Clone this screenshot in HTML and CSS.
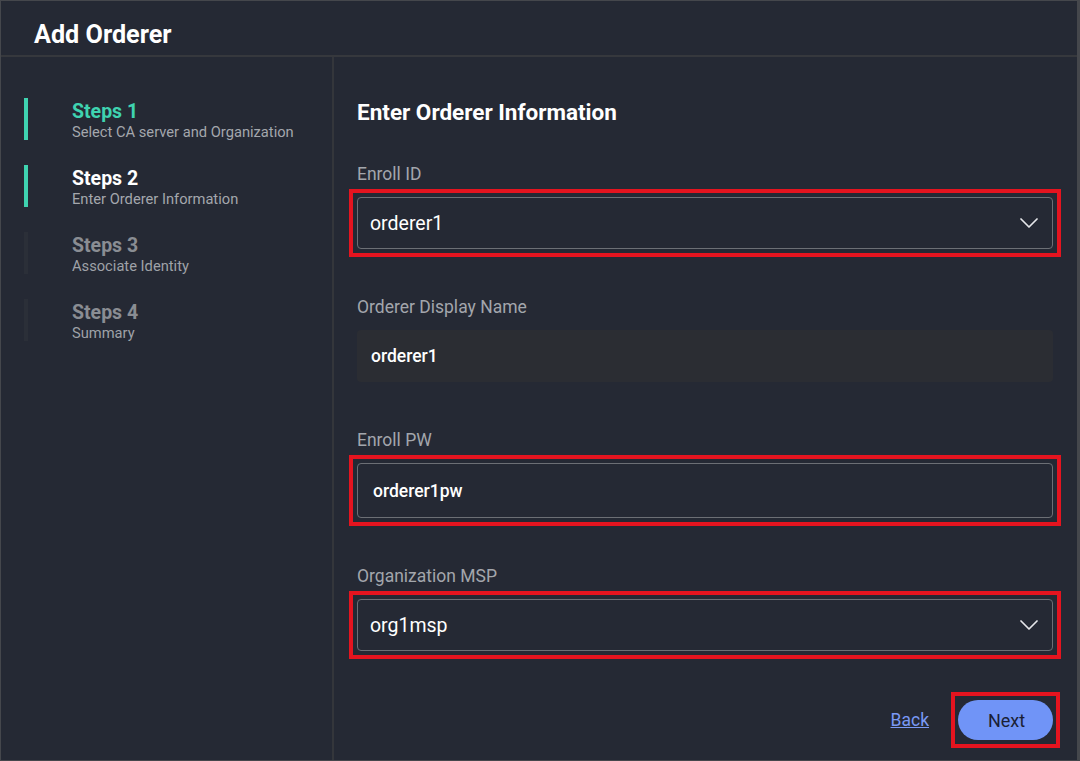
FILE: index.html
```html
<!DOCTYPE html>
<html lang="en">
<head>
<meta charset="utf-8">
<title>Add Orderer</title>
<link rel="stylesheet" href="styles.css">
</head>
<body>
<div class="dialog">
  <header class="header">
    <h1 class="title">Add Orderer</h1>
  </header>
  <div class="content">
    <nav class="sidebar">
      <div class="step step-done">
        <span class="bar"></span>
        <div class="step-text">
          <div class="step-title">Steps 1</div>
          <div class="step-sub">Select CA server and Organization</div>
        </div>
      </div>
      <div class="step step-current">
        <span class="bar"></span>
        <div class="step-text">
          <div class="step-title">Steps 2</div>
          <div class="step-sub">Enter Orderer Information</div>
        </div>
      </div>
      <div class="step step-todo">
        <span class="bar"></span>
        <div class="step-text">
          <div class="step-title">Steps 3</div>
          <div class="step-sub">Associate Identity</div>
        </div>
      </div>
      <div class="step step-todo">
        <span class="bar"></span>
        <div class="step-text">
          <div class="step-title">Steps 4</div>
          <div class="step-sub">Summary</div>
        </div>
      </div>
    </nav>
    <main class="main">
      <h2 class="section-title">Enter Orderer Information</h2>

      <div class="field">
        <div class="label">Enroll ID</div>
        <div class="select highlight">
          <span class="select-value">orderer1</span>
          <svg class="chevron" width="18" height="10" viewBox="0 0 18 10"><path d="M1 1 L9 9 L17 1" fill="none" stroke="#e6e7ea" stroke-width="1.7" stroke-linecap="round" stroke-linejoin="round"/></svg>
        </div>
      </div>

      <div class="field">
        <div class="label">Orderer Display Name</div>
        <div class="input input-filled">orderer1</div>
      </div>

      <div class="field">
        <div class="label">Enroll PW</div>
        <div class="input input-outlined highlight">orderer1pw</div>
      </div>

      <div class="field">
        <div class="label">Organization MSP</div>
        <div class="select highlight">
          <span class="select-value">org1msp</span>
          <svg class="chevron" width="18" height="10" viewBox="0 0 18 10"><path d="M1 1 L9 9 L17 1" fill="none" stroke="#e6e7ea" stroke-width="1.7" stroke-linecap="round" stroke-linejoin="round"/></svg>
        </div>
      </div>

      <div class="actions">
        <a class="back" href="#">Back</a>
        <button class="next highlight" type="button">Next</button>
      </div>
    </main>
  </div>
</div>
</body>
</html>
```

FILE: styles.css
```css
* { box-sizing: border-box; }

html, body {
  margin: 0;
  padding: 0;
  background: #252934;
}

body {
  font-family: Roboto, "Liberation Sans", Arial, sans-serif;
  color: #ffffff;
}

.dialog {
  width: 1080px;
  height: 761px;
  border: 1px solid #45474c;
  border-right-width: 3px;
  background: #252934;
  display: flex;
  flex-direction: column;
  overflow: hidden;
}

.header {
  height: 56px;
  flex: none;
  border-bottom: 2px solid #36383d;
  padding: 19px 0 0 33px;
}

.title {
  margin: 0;
  font-size: 25.2px;
  line-height: 30px;
  font-weight: 700;
  color: #ffffff;
}

.content {
  flex: 1;
  display: flex;
}

.sidebar {
  width: 333px;
  flex: none;
  border-right: 2px solid #34363b;
  padding: 41px 0 0 23px;
  display: flex;
  flex-direction: column;
  gap: 25px;
}

.step {
  display: flex;
  align-items: stretch;
  gap: 44px;
  height: 42px;
}

.bar {
  width: 4px;
  flex: none;
  background: #2b2f38;
}

.step-done .bar,
.step-current .bar {
  background: #3fd3b0;
}

.step-text {
  display: flex;
  flex-direction: column;
  justify-content: center;
  padding-top: 5px;
}

.step-title {
  font-size: 19.5px;
  line-height: 22px;
  font-weight: 700;
}

.step-sub {
  font-size: 14.7px;
  line-height: 19px;
  color: #a4a7ad;
}

.step-done .step-title { color: #3fd3b0; }
.step-current .step-title { color: #ffffff; }
.step-todo .step-title { color: #8a8d93; }
.step-todo .step-sub { color: #9fa2a8; }

.main {
  flex: 1;
  padding: 43px 24px 0 23px;
  display: flex;
  flex-direction: column;
}

.section-title {
  margin: 0 0 39px;
  font-size: 22.5px;
  line-height: 25px;
  font-weight: 700;
  color: #ffffff;
}

.field {
  margin-bottom: 48px;
}

.label {
  font-size: 17.5px;
  line-height: 20px;
  color: #a3a6ac;
  margin-bottom: 13px;
}

.select {
  position: relative;
  height: 52px;
  border: 1.5px solid #6c6f75;
  border-radius: 4px;
  display: flex;
  align-items: center;
  justify-content: space-between;
  padding: 0 14px 0 12px;
}

.select-value {
  font-size: 19.5px;
  color: #ffffff;
}

.chevron {
  display: block;
}

.input {
  position: relative;
  height: 52px;
  display: flex;
  align-items: center;
  padding: 0 14px;
  font-size: 17.5px;
  font-weight: 500;
  color: #ffffff;
  border-radius: 4px;
}

.input-filled {
  background: #2b2d33;
}

.input-outlined {
  height: 55px;
  border: 1.5px solid #6c6f75;
  padding-left: 15px;
}

/* annotation boxes drawn over the highlighted controls */
.highlight::after {
  content: "";
  position: absolute;
  inset: -9px;
  border: 4px solid #e5141f;
  pointer-events: none;
}

.actions {
  margin-top: 1px;
  display: flex;
  justify-content: flex-end;
  align-items: center;
  gap: 29px;
}

.back {
  font-size: 17.5px;
  color: #7a99f5;
  text-decoration: underline;
}

.next {
  position: relative;
  width: 95px;
  height: 40px;
  border: none;
  border-radius: 20px;
  background: #7094f7;
  color: #1b1f35;
  font-family: Roboto, "Liberation Sans", Arial, sans-serif;
  font-size: 18px;
  padding: 0 0 0 2px;
  cursor: pointer;
}

.next.highlight::after {
  inset: -8px -7px;
}
```
